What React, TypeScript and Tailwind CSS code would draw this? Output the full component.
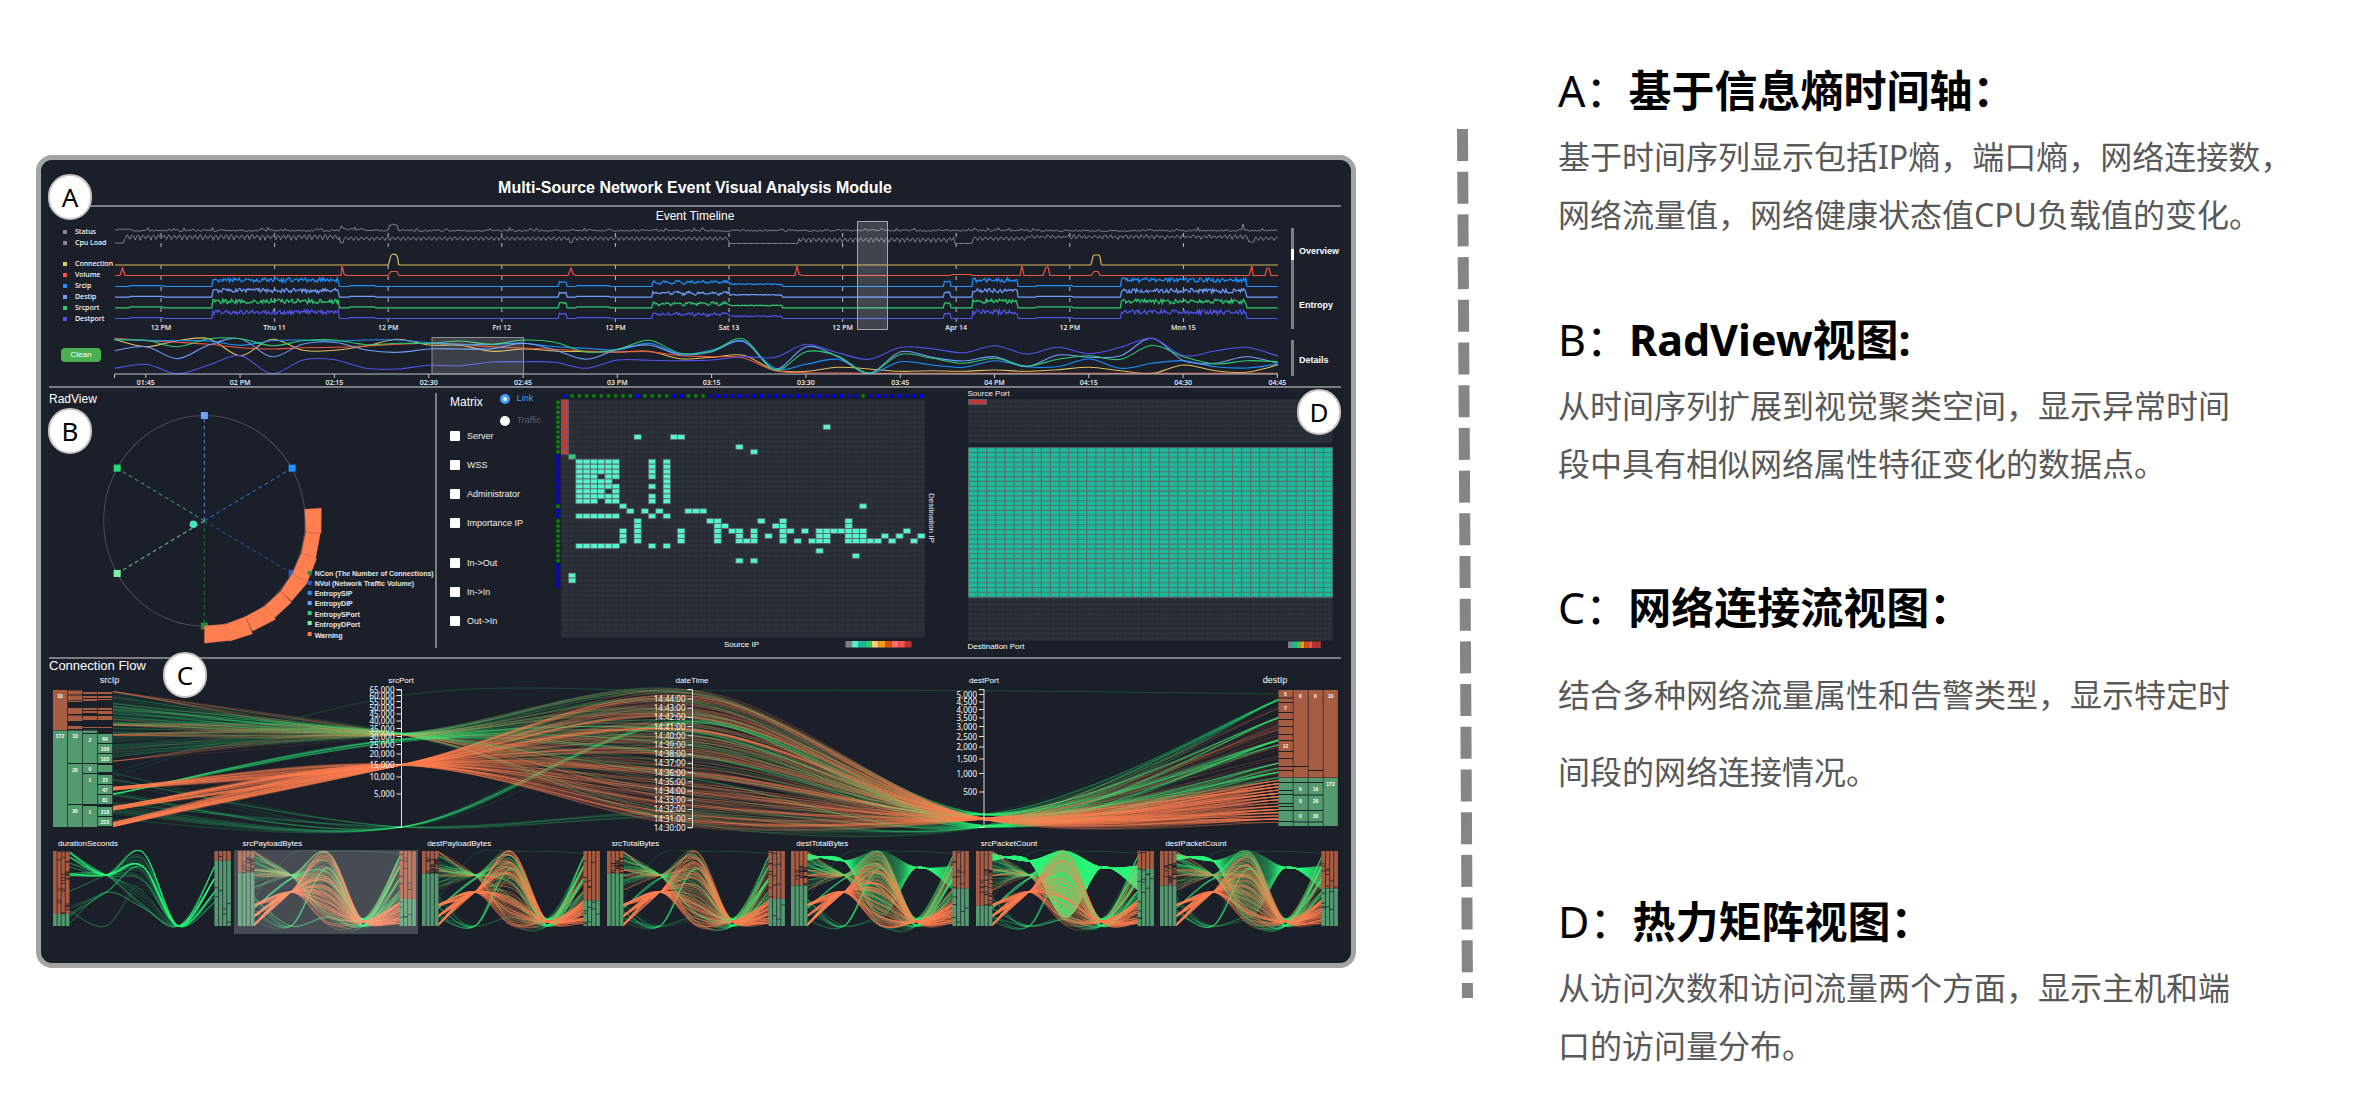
import React from "react";

/* ---------- shared helpers ---------- */

const UI_FONT = "font-['Liberation_Sans',Arial,sans-serif]";
const AXIS_FONT = "font-['Noto_Sans','Noto_Sans_CJK_SC',sans-serif]";

const ORANGE = "#ff7f50";
const GREEN = "#2bf57a";

type Point = [number, number];

function rng(seed: number) {
  let s = seed;
  return () => {
    s = (s + 0x6d2b79f5) | 0;
    let t = Math.imul(s ^ (s >>> 15), 1 | s);
    t = (t + Math.imul(t ^ (t >>> 7), 61 | t)) ^ t;
    return ((t ^ (t >>> 14)) >>> 0) / 4294967296;
  };
}

const r1 = (n: number) => Math.round(n * 10) / 10;

function polyline(points: Point[]) {
  return "M" + points.map(([x, y]) => `${r1(x)},${r1(y)}`).join("L");
}

function smooth(points: Point[]) {
  let d = `M${r1(points[0][0])},${r1(points[0][1])}`;
  for (let i = 0; i < points.length - 1; i++) {
    const a = points[i - 1] ?? points[i];
    const b = points[i];
    const c = points[i + 1];
    const e = points[i + 2] ?? c;
    d += `C${r1(b[0] + (c[0] - a[0]) / 6)},${r1(b[1] + (c[1] - a[1]) / 6)} ${r1(c[0] - (e[0] - b[0]) / 6)},${r1(
      c[1] - (e[1] - b[1]) / 6
    )} ${r1(c[0])},${r1(c[1])}`;
  }
  return d;
}

/* ---------- A: event timeline ---------- */

const overviewTicks = ["12 PM", "Thu 11", "12 PM", "Fri 12", "12 PM", "Sat 13", "12 PM", "Apr 14", "12 PM", "Mon 15"];

const seriesLegend = [
  [
    { name: "Status", color: "bg-[#7f8694]" },
    { name: "Cpu Load", color: "bg-[#7f8694]" },
  ],
  [
    { name: "Connection", color: "bg-[#e8c35a]" },
    { name: "Volume", color: "bg-[#ff5a3c]" },
    { name: "Srcip", color: "bg-[#1e90ff]" },
    { name: "Destip", color: "bg-[#6f9fff]" },
    { name: "Srcport", color: "bg-[#2ecc71]" },
    { name: "Destport", color: "bg-[#5352ed]" },
  ],
];

function statusLine() {
  const rand = rng(4);
  const pts: Point[] = [];
  for (let x = 115; x <= 1278; x += 1.5) {
    let y = 231.5 - (rand() > 0.85 ? rand() * 4 : rand() * 1.8);
    if (x < 130) y -= 1;
    if (x > 340 && x < 372) y -= 1.5 * (1 - (x - 340) / 40);
    if (x > 340 && x < 343) y -= 3;
    if (x > 389 && x < 398) y = 224 + rand() * 2.5;
    if (x > 1242 && x < 1244) y = 224;
    pts.push([x, y]);
  }
  return polyline(pts);
}

function cpuLine() {
  const rand = rng(9);
  const pts: Point[] = [];
  for (let x = 115; x <= 1278; x += 1.2) {
    const wave = Math.abs(Math.sin((x * Math.PI) / 5.2));
    let y = 241 - wave * 4;
    if (x < 124) y = 243;
    else if (x < 340) y = 240 - wave * 5.5 + rand();
    else if (x < 344) y = 243;
    else if (x > 569 && x < 573) y = 242.5;
    else if (x > 729 && x < 798) y = 243.5;
    else if (x >= 798 && x < 950) y = 243 - wave * 5;
    else if (x >= 955 && x < 973) y = 243.5;
    else if (x >= 1028 && x < 1248) y = 238 - wave * 3.5 + rand() * 2;
    else if (x >= 1248 && x < 1254) y = 242;
    pts.push([x, y]);
  }
  return polyline(pts);
}

const connectionLine =
  "M115,265H388C390,262 390,255 392,254.5C395,253.5 398,253.5 398.500,264.500L400,265H1090C1093,263 1092,255.5 1094,255H1099C1101,256 1100,264 1102,265H1278";

const volumeLine =
  "M115,275.500H120L122.500,268L125,275.500H341L342,266L344,274L347,275.500H388L391,271.500H397L399,275.500H568L571,268L573,274L576,275.500H795L797,266L799,274L802,275.500H950L952,274.500H970L973,275.500H1020L1022,266L1024,275.500H1043L1046,267H1048L1050,275.500H1091L1094,271.500H1098L1100,275.500H1249L1252,266L1253,275.500H1265L1267,268H1269L1271,275.500H1278";

function entropyLine(offset: number, seed: number) {
  const rand = rng(seed);
  const pts: Point[] = [];
  const within = (x: number, a: number, b: number) => x >= a && x <= b;
  for (let x = 115; x <= 1278; x += 1.1) {
    let y = 286.5;
    if (within(x, 130, 163) || within(x, 350, 375) || within(x, 577, 610) || within(x, 1036, 1073)) y = 285.6;
    if (within(x, 212, 339) || within(x, 973, 1018) || within(x, 1121, 1246)) y = 280.5 + (rand() - 0.6) * 4.5;
    if (within(x, 559, 567) || within(x, 944, 950)) y = 281 + rand() * 1.5;
    if (within(x, 652, 729)) y = 283 + Math.max(0, Math.sin(x / 1.9)) * 1.8 - rand() * 2.5;
    if (within(x, 729, 782)) y = 284.6 - rand() * 0.9;
    pts.push([x, y + offset]);
  }
  return polyline(pts);
}

const entropySeries = [
  { color: "#1e90ff", offset: 0, seed: 21 },
  { color: "#6f9fff", offset: 10.7, seed: 22 },
  { color: "#2ecc71", offset: 21.3, seed: 23 },
  { color: "#5352ed", offset: 32, seed: 24 },
];

function OverviewChart() {
  return (
    <svg viewBox="114 222 1166 112" className="block h-auto w-full overflow-visible font-medium" role="img" aria-label="Event overview">
      {overviewTicks.map((label, i) => {
        const x = 161 + i * 113.6;
        return (
          <g key={i}>
            <path
              d={[233, 243, 265, 276, 287, 298, 308, 318].map((y) => `M${x},${y}v4`).join("")}
              stroke="#b8bbc0"
              strokeWidth="1"
            />
            <text x={x} y="329.500" textAnchor="middle" fontSize="7" fill="#fff">
              {label}
            </text>
          </g>
        );
      })}
      <g fill="none" strokeWidth="1">
        <path d={statusLine()} stroke="#868d9a" strokeWidth="0.9" />
        <path d={cpuLine()} stroke="#868d9a" strokeWidth="0.9" />
        <path d={connectionLine} stroke="#d9b858" strokeWidth="1.2" />
        <path d={volumeLine} stroke="#f0553c" strokeWidth="1.2" />
        {entropySeries.map((s) => (
          <path key={s.color} d={entropyLine(s.offset, s.seed)} stroke={s.color} strokeWidth="1.2" />
        ))}
      </g>
      <rect x="857.500" y="221.500" width="30" height="108" fill="#fff" fillOpacity="0.17" stroke="#a5a7ab" />
    </svg>
  );
}

const detailSeries = [
  {
    color: "#e3be59",
    v: [568, 590, 572, 566, 617, 568, 601, 601, 588, 568, 585, 586, 604, 597, 603, 605, 606, 604, 626, 622, 616, 660, 664, 652, 657, 664, 662, 664, 660, 664, 659, 652, 662, 670, 645, 662, 667, 645],
  },
  {
    color: "#f0553c",
    v: [565, 572, 577, 583, 593, 597, 593, 592, 588, 583, 580, 583, 590, 594, 598, 603, 606, 605, 617, 620, 624, 662, 668, 669, 670, 670, 670, 670, 670, 670, 670, 670, 670, 670, 670, 670, 670, 670],
  },
  {
    color: "#1e90ff",
    v: [568, 571, 572, 573, 586, 572, 570, 573, 570, 570, 578, 583, 583, 580, 590, 595, 600, 580, 612, 600, 575, 655, 643, 628, 670, 635, 645, 652, 632, 650, 650, 627, 655, 640, 632, 650, 654, 642],
  },
  {
    color: "#6f9fff",
    v: [602, 590, 626, 585, 566, 620, 582, 577, 600, 607, 597, 597, 596, 580, 600, 628, 598, 585, 614, 605, 573, 658, 590, 620, 670, 605, 622, 633, 620, 650, 615, 622, 617, 565, 632, 640, 620, 640],
  },
  {
    color: "#2ecc71",
    v: [570, 571, 590, 566, 566, 587, 572, 570, 584, 580, 580, 573, 583, 570, 577, 606, 598, 571, 610, 603, 567, 660, 605, 618, 670, 613, 625, 640, 625, 648, 628, 617, 628, 586, 620, 642, 632, 635],
  },
  {
    color: "#5352ed",
    v: [655, 643, 671, 645, 617, 671, 630, 629, 655, 657, 646, 647, 636, 635, 637, 655, 630, 631, 632, 630, 620, 622, 583, 608, 628, 592, 596, 608, 587, 612, 592, 611, 592, 565, 617, 603, 592, 618],
  },
];

const detailTicks = ["01:45", "02 PM", "02:15", "02:30", "02:45", "03 PM", "03:15", "03:30", "03:45", "04 PM", "04:15", "04:30", "04:45"];

function DetailChart() {
  return (
    <svg viewBox="114 334 1166 52" className="block h-auto w-full overflow-visible font-medium" role="img" aria-label="Event details">
      <g fill="none" strokeWidth="1.1">
        {detailSeries.map((s) => (
          <path key={s.color} d={smooth(s.v.map((v, k): Point => [114.6 + k * 31.44, 150 + v / 3]))} stroke={s.color} />
        ))}
      </g>
      <path d="M114.500,378V374H1278" fill="none" stroke="#c3c5c8" strokeWidth="1" />
      <rect x="432" y="337.500" width="91.500" height="36.500" fill="#fff" fillOpacity="0.15" stroke="#8d9095" />
      {detailTicks.map((label, i) => {
        const x = 145.8 + i * 94.3;
        return (
          <g key={label}>
            <path d={`M${x},374v4`} stroke="#c3c5c8" />
            <text x={x} y="384.500" textAnchor="middle" fontSize="7" fill="#fff">
              {label}
            </text>
          </g>
        );
      })}
    </svg>
  );
}

function Timeline() {
  return (
    <section className="border-b-2 border-[#7b7d82] pt-[3px]">
      <h2 className="text-center text-[12px] leading-3 text-white">Event Timeline</h2>
      <div className="grid grid-cols-[65fr_1166fr_61fr]">
        <div className={`flex flex-col gap-[10px] pt-1 pl-[14px] ${AXIS_FONT}`}>
          {seriesLegend.map((group, g) => (
            <ul key={g}>
              {group.map((s) => (
                <li key={s.name} className="flex h-[11px] items-center gap-[8px] text-[7px] leading-[11px] font-medium whitespace-nowrap text-white">
                  <span className={`h-1 w-1 shrink-0 ${s.color}`} />
                  {s.name}
                </li>
              ))}
            </ul>
          ))}
        </div>
        <div className={AXIS_FONT}>
          <OverviewChart />
        </div>
        <div className="flex items-stretch gap-[5px] pt-[6px] pb-[5px] pl-[11px]">
          <div className="w-[3px] shrink-0 bg-[#7f7f7f] pt-[21px]">
            <div className="h-[11px] bg-white" />
          </div>
          <div className="flex flex-col gap-[42px] pt-[17px] text-[9px] leading-3 font-bold text-white">
            <span>Overview</span>
            <span>Entropy</span>
          </div>
        </div>
        <div className="pt-[14px] pl-3">
          <button type="button" className="block h-[14px] w-10 rounded-[4px] bg-[#4caf50] text-center text-[8px] leading-[14px] text-white">
            Clean
          </button>
        </div>
        <div className={AXIS_FONT}>
          <DetailChart />
        </div>
        <div className="flex items-stretch gap-[5px] pt-[6px] pb-[10px] pl-[11px]">
          <div className="w-[3px] shrink-0 bg-[#7f7f7f]" />
          <span className="self-center pt-1 text-[9px] leading-3 font-bold text-white">Details</span>
        </div>
      </div>
    </section>
  );
}

/* ---------- B: radial view ---------- */

const radNodes = [
  { x: 204, y: 415.5, color: "#6f9fff" },
  { x: 291.5, y: 468, color: "#1e90ff" },
  { x: 291.5, y: 573, color: "#2a5cc4" },
  { x: 204, y: 625.5, color: "#218c3a" },
  { x: 117, y: 573, color: "#7bf5a5" },
  { x: 117, y: 468, color: "#2ed573" },
];

const warningSegments = [
  "304,509 320.700,507.700 320.500,533 305,531.700",
  "305,531.700 319.700,533 315,558.300 300.700,552.700",
  "300.700,552.700 316,558.300 306.700,581.700 291.700,573.300",
  "291.700,573.300 307.300,581.700 291,600.700 280,590.700",
  "280,590.700 291,601.700 272.300,619 264,605.700",
  "264,605.700 275,619 251.700,630.700 245,616",
  "245,616 252,633.300 229,640.700 225.300,623.700",
  "225.300,623.700 230,640 204,642.700 204,625.300",
];

const radLegend = [
  { y: 573, label: "NCon (The Number of Connections)", color: "#218c3a" },
  { y: 583, label: "NVol (Network Traffic Volume)", color: "#2a5cc4" },
  { y: 593, label: "EntropySIP", color: "#1e90ff" },
  { y: 603, label: "EntropyDIP", color: "#6f9fff" },
  { y: 613, label: "EntropySPort", color: "#2ed573" },
  { y: 623, label: "EntropyDPort", color: "#7bf5a5" },
  { y: 634, label: "Warning", color: ORANGE },
];

function RadView() {
  return (
    <div>
      <h2 className="pt-[3px] text-[12px] leading-4 text-white">RadView</h2>
      <svg viewBox="49 407 387 249" className="block h-auto w-full overflow-visible" role="img" aria-label="Radial view">
        <ellipse cx="204" cy="520.500" rx="100.500" ry="105" fill="none" stroke="#4a4d57" />
        {radNodes.map((n) => (
          <line key={n.color} x1="204" y1="520.500" x2={n.x} y2={n.y} stroke={n.color} strokeWidth="1.2" strokeOpacity="0.65" strokeDasharray="4 3" />
        ))}
        {radNodes.map((n) => (
          <rect key={n.color} x={n.x - 3.5} y={n.y - 3.5} width="7" height="7" fill={n.color} />
        ))}
        {warningSegments.map((p) => (
          <polygon key={p} points={p} fill={ORANGE} stroke="#c9653f" strokeWidth="0.3" />
        ))}
        <circle cx="193" cy="524" r="3.800" fill="#4be3bd" />
        {radLegend.map((l) => (
          <g key={l.label}>
            <rect x="307" y={l.y - 2.5} width="4" height="4" fill={l.color} />
            <text x="314" y={l.y + 3} fontSize="7" fontWeight="700" fill="#e4e6ea">
              {l.label}
            </text>
          </g>
        ))}
      </svg>
    </div>
  );
}

/* ---------- D: matrix ---------- */

function MatrixCheckbox({ label }: { label: string }) {
  return (
    <label className="flex h-[14px] items-center gap-[7px] text-[9px] leading-[14px] whitespace-nowrap text-[#f0f0f0]">
      <input type="checkbox" className="h-[10px] w-[10px] appearance-none rounded-[1px] bg-white checked:bg-[#409eff]" />
      {label}
    </label>
  );
}

function MatrixControls() {
  return (
    <div className="pl-[13px]">
      <div className="flex gap-[17px] pt-[3px]">
        <h2 className="pt-[3px] text-[12px] leading-4 text-white">Matrix</h2>
        <div className="flex flex-col gap-[6px]">
          <label className="flex h-4 items-center gap-[7px] text-[9px] text-[#409eff]">
            <input
              type="radio"
              name="metric"
              defaultChecked
              className="h-[10px] w-[10px] appearance-none rounded-full border-[3px] border-[#409eff] bg-white"
            />
            Link
          </label>
          <label className="flex h-4 items-center gap-[7px] text-[9px] text-[#5d6066]">
            <input type="radio" name="metric" className="h-[10px] w-[10px] appearance-none rounded-full bg-white" />
            Traffic
          </label>
        </div>
      </div>
      <div className="flex flex-col gap-[15px]">
        {["Server", "WSS", "Administrator", "Importance IP"].map((l) => (
          <MatrixCheckbox key={l} label={l} />
        ))}
      </div>
      <div className="mt-[26px] flex flex-col gap-[15px]">
        {["In->Out", "In->In", "Out->In"].map((l) => (
          <MatrixCheckbox key={l} label={l} />
        ))}
      </div>
    </div>
  );
}

const block = [2, 3, 4, 5, 6, 7];
const ipCells: Record<number, number[]> = {
  5: [36],
  7: [10, 15, 16],
  9: [24],
  10: [26],
  12: [...block, 12, 14],
  13: [...block, 12, 14],
  14: [...block, 12, 14],
  15: [2, 3, 4, 6, 7, 12, 14],
  16: [2, 3, 4, 5, 6, 14],
  17: [...block, 12, 14],
  18: [2, 3, 4, 5, 7, 14],
  19: [...block, 12, 14],
  20: [2, 3, 4, 6, 7, 12, 14],
  21: [8, 41],
  22: [9, 11, 13, 17, 18, 19],
  23: [...block, 12, 14],
  24: [10, 20, 21, 27, 30, 39],
  25: [10, 21, 22, 29, 30, 39],
  26: [8, 10, 16, 21, 23, 24, 26, 30, 31, 33, 35, 36, 37, 38, 39, 40, 41, 47],
  27: [8, 10, 16, 21, 24, 26, 28, 30, 35, 36, 39, 40, 41, 44, 46, 49],
  28: [8, 10, 16, 21, 24, 25, 26, 30, 32, 34, 35, 36, 39, 40, 41, 42, 43, 45, 48],
  29: [...block, 12, 14],
  30: [35],
  31: [40],
  32: [24, 26],
  35: [1],
  36: [1],
};

function gridLines(x: number, y: number, cols: number, rows: number, cw: number, ch: number) {
  let d = "";
  for (let c = 0; c <= cols; c++) d += `M${r1(x + c * cw)},${y}v${r1(rows * ch)}`;
  for (let r = 0; r <= rows; r++) d += `M${x},${r1(y + r * ch)}h${r1(cols * cw)}`;
  return d;
}

function Dot({ x, y, server }: { x: number; y: number; server: boolean }) {
  return server ? <circle cx={x} cy={y} r="2" fill="#0a800a" /> : <rect x={x - 1.5} y={y - 2} width="3" height="4" fill="#0000f0" />;
}

const isServerColumn = (i: number) => (i >= 1 && i <= 9) || (i >= 11 && i <= 14) || (i >= 17 && i <= 19) || i === 41;
const isServerRow = (i: number) => i <= 10 || i === 21 || (i >= 24 && i <= 32);

function ColorScale({ x, y, w, colors }: { x: number; y: number; w: number; colors: string[] }) {
  return (
    <g>
      {colors.map((c, i) => (
        <rect key={i} x={r1(x + i * w)} y={y} width={w} height="6.500" fill={c} />
      ))}
    </g>
  );
}

function IpMatrix() {
  const x0 = 561.2;
  const y0 = 399.8;
  const cw = 7.276;
  const ch = 4.95;
  return (
    <svg viewBox="550 388 395 268" className="block h-auto w-full" role="img" aria-label="IP matrix">
      <rect x={x0} y={y0} width={50 * cw} height={48 * ch} fill="#2c3038" />
      <path d={gridLines(x0, y0, 50, 48, cw, ch)} stroke="#252a32" strokeWidth="0.8" />
      {Array.from({ length: 50 }, (_, i) => (
        <Dot key={i} x={x0 + (i + 0.5) * cw} y={396} server={isServerColumn(i)} />
      ))}
      {Array.from({ length: 38 }, (_, i) => (
        <Dot key={i} x={558} y={y0 + (i + 0.5) * ch} server={isServerRow(i)} />
      ))}
      <g stroke="#5b6269" strokeWidth="0.8">
        {Array.from({ length: 11 }, (_, r) => (
          <rect key={r} x={x0} y={y0 + r * ch} width={cw} height={ch} fill="#c23b3b" />
        ))}
        <rect x={x0 + cw} y={y0 + 11 * ch} width={cw} height={ch} fill="#2ecc71" />
        {Object.entries(ipCells).map(([row, cols]) =>
          cols.map((c) => (
            <rect key={`${row}-${c}`} x={r1(x0 + c * cw)} y={r1(y0 + Number(row) * ch)} width={cw} height={ch} fill="#55f5cb" />
          ))
        )}
      </g>
      <text x="741.500" y="646.500" textAnchor="middle" fontSize="8" fill="#fff">
        Source IP
      </text>
      <text transform="translate(929 493) rotate(90)" fontSize="8" fill="#f0f0f0">
        Destination IP
      </text>
      <ColorScale
        x={845.5}
        y={641}
        w={6.6}
        colors={["#808080", "#55efc4", "#1abc9c", "#2ecc71", "#fdcb6e", "#f39c12", "#d35400", "#ff6b6b", "#ff4d4d", "#b83232"]}
      />
    </svg>
  );
}

function PortMatrix() {
  const x0 = 968.5;
  const y0 = 399.5;
  const cw = 9.1;
  const ch = 4.82;
  return (
    <svg viewBox="945 388 396 268" className="block h-auto w-full" role="img" aria-label="Port matrix">
      <text x="967.500" y="396" fontSize="8" fill="#f0f0f0">
        Source Port
      </text>
      <rect x={x0} y={y0} width={40 * cw} height={9 * ch} fill="#2c3038" />
      <path d={gridLines(x0, y0, 40, 9, cw, ch)} stroke="#252a32" strokeWidth="0.8" />
      <rect x={x0} y={y0 + 41 * ch} width={40 * cw} height={9 * ch} fill="#2c3038" />
      <path d={gridLines(x0, y0 + 41 * ch, 40, 9, cw, ch)} stroke="#252a32" strokeWidth="0.8" />
      <g stroke="#5b6269" strokeWidth="0.8" fill="#c23b3b">
        <rect x={x0} y={y0} width={cw} height={ch} />
        <rect x={x0 + cw} y={y0} width={cw} height={ch} />
      </g>
      <rect x={x0} y={y0 + 10 * ch} width={40 * cw} height={31 * ch} fill="#1abc9c" />
      <path d={gridLines(x0, y0 + 10 * ch, 40, 31, cw, ch)} stroke="#56706d" strokeWidth="1.1" />
      <text x="967.500" y="649" fontSize="8" fill="#fff">
        Destination Port
      </text>
      <ColorScale
        x={1288}
        y={641.5}
        w={4.1}
        colors={["#808080", "#1abc9c", "#2ecc71", "#f39c12", "#d35400", "#ff4d4d", "#b83232", "#b83232"]}
      />
    </svg>
  );
}

/* ---------- C: connection flow ---------- */

type FlowLine = { y: number[]; color: string; o: number };
type FlowVariant = "base" | "green" | "fan" | "heavy";

function buildFlow(variant: FlowVariant, density: number, gain: number, seed: number): FlowLine[] {
  const rand = rng(seed);
  const lines: FlowLine[] = [];
  const pick = (a: number[]) => a[Math.floor(rand() * a.length)];
  const n = (count: number) => Math.round(count * density);
  const vary = (o: number) => Math.min(1, o * gain * (0.45 + rand() * 1.1));
  const greenDest = () => pick([0.068, 0.075, 0.2, 0.205, 0.365, 0.37, 0.535, 0.57, 0.6, 0.64, 0.4]);
  const greenPort = () => pick([0.905, 0.91, 1, 1, 0.99]);

  if (variant === "green") {
    for (let i = 0; i < n(52); i++)
      lines.push({
        y: [pick([0.01, 0.03, 0.08, 0.3, 0.32, 0.33, rand() * 0.55]), 0.32, pick([rand() * 0.75, 0.2, 0.01]), 1, pick([0.2, 0.36, 0.365, 0.54, 0.55, 0.68])],
        color: GREEN,
        o: 0.24,
      });
    for (let i = 0; i < n(8); i++) lines.push({ y: [0.7 + rand() * 0.3, 0.55, pick([0.21, 0.22, 0.75]), 1, 0.36], color: GREEN, o: 0.22 });
    for (let i = 0; i < n(3); i++) lines.push({ y: [0.8, 1, 0.4 + rand() * 0.1, 1, 0.6], color: GREEN, o: 0.16 });
    return lines;
  }

  if (variant === "fan" || variant === "heavy") {
    const count = variant === "heavy" ? 170 : 60;
    for (let i = 0; i < count; i++) {
      const t = i / count;
      lines.push({ y: [0.04 + t * 0.08, 0.13, t * 0.9, 0.22, 0.2 + t * 0.32], color: GREEN, o: variant === "heavy" ? 0.8 : 0.32 });
    }
  }

  for (let i = 0; i < n(90); i++)
    lines.push({ y: [rand() * 0.5, 0.315 + rand() * 0.012, Math.pow(rand(), 1.2), greenPort(), greenDest()], color: GREEN, o: vary(0.1) });
  for (let i = 0; i < n(50); i++)
    lines.push({
      y: [pick([0.01, 0.015, 0.25, 0.255, 0.325, 0.33, 0.52, rand() * 0.5]), 0.325, rand(), 0.94, rand() * 0.6 + 0.1],
      color: ORANGE,
      o: vary(0.16),
    });
  for (let i = 0; i < n(10); i++) lines.push({ y: [0.757 + rand() * 0.006, 0.358 + rand() * 0.02, rand() * 0.5, 0.91, greenDest()], color: GREEN, o: vary(0.26) });
  for (let i = 0; i < n(22); i++)
    lines.push({
      y: [0.6 + rand() * 0.35, 1, rand() > 0.25 ? pick([0.22, 0.23, 0.24, rand() * 0.4]) : 0.87 + rand() * 0.06, 0.99, greenDest()],
      color: GREEN,
      o: vary(0.16),
    });
  for (let i = 0; i < 2; i++) lines.push({ y: [0.6 + i * 0.03, 0.04, 0.005, 0.005, 0.03], color: GREEN, o: 0.1 });
  const total = n(150);
  for (let i = 0; i < total; i++) {
    const src = pick([0.708, 0.718, 0.724, 0.85, 0.86, 0.87, 0.965, 0.978, 0.99]) + rand() * 0.008;
    const dest = 0.66 + (Math.floor(rand() * 14) / 14) * 0.33;
    lines.push({ y: [src, 0.543 + rand() * 0.006, rand(), 0.935 + rand() * 0.012, dest], color: ORANGE, o: vary(0.25) });
  }
  for (let i = 0; i < n(12); i++)
    lines.push({ y: [0.02 + rand() * 0.3, 0.32, rand(), greenPort(), pick([0.068, 0.2, 0.365, 0.535, 0.56, 0.6, 0.625])], color: GREEN, o: vary(0.2) });
  return lines;
}

function FlowCurves({ lines, xs, top, height }: { lines: FlowLine[]; xs: number[]; top: number; height: number }) {
  return (
    <g fill="none">
      {lines.map((l, i) => (
        <path key={i} d={smooth(l.y.map((v, k): Point => [xs[k], top + v * height]))} stroke={l.color} strokeOpacity={l.o} strokeWidth="1" />
      ))}
    </g>
  );
}

const RED_BLOCK = "#a85c42";
const GREEN_BLOCK = "#549a6f";

type TreeCell = { c: number; a: number; b: number; t?: string; red?: boolean };

const srcCells: TreeCell[] = [
  { c: 0, a: 690, b: 730, t: "10", red: true },
  { c: 0, a: 730.5, b: 827, t: "172" },
  { c: 1, a: 730.5, b: 763, t: "10" },
  { c: 1, a: 764, b: 804, t: "20" },
  { c: 1, a: 805, b: 827, t: "30" },
  { c: 2, a: 730.5, b: 733 },
  { c: 2, a: 734, b: 763, t: "2" },
  { c: 2, a: 764, b: 773, t: "0" },
  { c: 2, a: 774, b: 804, t: "1" },
  { c: 2, a: 806, b: 827, t: "1" },
  { c: 3, a: 734, b: 743, t: "66" },
  { c: 3, a: 744, b: 753, t: "108" },
  { c: 3, a: 754, b: 763, t: "105" },
  { c: 3, a: 765, b: 772 },
  { c: 3, a: 775, b: 784, t: "23" },
  { c: 3, a: 785, b: 794, t: "47" },
  { c: 3, a: 795, b: 804, t: "81" },
  { c: 3, a: 807, b: 816, t: "218" },
  { c: 3, a: 817, b: 826, t: "223" },
  { c: 1, a: 690.5, b: 694.5, red: true },
  { c: 1, a: 695.5, b: 700, red: true },
  { c: 1, a: 700.7, b: 702, red: true },
  { c: 1, a: 708, b: 714, red: true },
  { c: 1, a: 715.5, b: 721, red: true },
  { c: 1, a: 726, b: 729, red: true },
  { c: 2, a: 692, b: 694, red: true },
  { c: 2, a: 696, b: 698, red: true },
  { c: 2, a: 699, b: 701, red: true },
  { c: 2, a: 708, b: 710, red: true },
  { c: 2, a: 711, b: 713, red: true },
  { c: 2, a: 716, b: 720, red: true },
  { c: 2, a: 727, b: 728, red: true },
  { c: 3, a: 692, b: 694, red: true },
  { c: 3, a: 696, b: 698, red: true },
  { c: 3, a: 699, b: 700, red: true },
  { c: 3, a: 708, b: 710, red: true },
  { c: 3, a: 711, b: 714, red: true },
  { c: 3, a: 716, b: 720, red: true },
  { c: 3, a: 727, b: 728, red: true },
];

const destCells: TreeCell[] = [
  { c: 3, a: 690, b: 777.5, t: "10", red: true },
  { c: 3, a: 778, b: 826, t: "172" },
  { c: 2, a: 690, b: 770, t: "0", red: true },
  { c: 2, a: 771, b: 777.5, red: true },
  { c: 1, a: 690, b: 766, t: "0", red: true },
  { c: 1, a: 767, b: 777.5, red: true },
  { c: 0, a: 690, b: 697.5, t: "5", red: true },
  { c: 0, a: 698.5, b: 702, red: true },
  { c: 0, a: 703, b: 712, t: "7", red: true },
  { c: 0, a: 713, b: 719, red: true },
  { c: 0, a: 720, b: 726, red: true },
  { c: 0, a: 727, b: 734, red: true },
  { c: 0, a: 735, b: 740, red: true },
  { c: 0, a: 741, b: 751, t: "12", red: true },
  { c: 0, a: 752, b: 758, red: true },
  { c: 0, a: 759, b: 766, red: true },
  { c: 0, a: 767, b: 770, red: true },
  { c: 0, a: 771, b: 777.5, red: true },
  { c: 0, a: 778, b: 782 },
  { c: 0, a: 783, b: 790 },
  { c: 0, a: 791, b: 794 },
  { c: 0, a: 795, b: 803 },
  { c: 0, a: 804, b: 806 },
  { c: 0, a: 807, b: 810 },
  { c: 0, a: 811, b: 821 },
  { c: 0, a: 822, b: 826 },
  { c: 1, a: 778, b: 782 },
  { c: 1, a: 783, b: 794.5, t: "0" },
  { c: 1, a: 795.5, b: 810, t: "0" },
  { c: 1, a: 811, b: 821.5, t: "0" },
  { c: 1, a: 822.5, b: 826 },
  { c: 2, a: 778, b: 782 },
  { c: 2, a: 783, b: 794.5, t: "10" },
  { c: 2, a: 795.5, b: 810, t: "20" },
  { c: 2, a: 811, b: 821.5, t: "30" },
  { c: 2, a: 822.5, b: 826 },
];

function TreeBlocks({ x, cells }: { x: number; cells: TreeCell[] }) {
  return (
    <g>
      {cells.map((cell, i) => (
        <g key={i}>
          <rect x={x + cell.c * 15} y={cell.a} width="14.300" height={cell.b - cell.a} fill={cell.red ? RED_BLOCK : GREEN_BLOCK} />
          {cell.t && (
            <text x={x + cell.c * 15 + 7} y={Math.min(cell.a + 7.5, (cell.a + cell.b) / 2 + 2)} textAnchor="middle" fontSize="5" fontWeight="700" fill="#fff">
              {cell.t}
            </text>
          )}
        </g>
      ))}
    </g>
  );
}

const portTicks: [string, number][] = [
  ["65,000", 690],
  ["60,000", 695.5],
  ["55,000", 701.5],
  ["50,000", 707.5],
  ["45,000", 714],
  ["40,000", 721],
  ["35,000", 728.5],
  ["30,000", 736.5],
  ["25,000", 744.5],
  ["20,000", 754],
  ["15,000", 764.5],
  ["10,000", 777],
  ["5,000", 794],
];

const destPortTicks: [string, number][] = [
  ["5,000", 694.5],
  ["4,500", 702],
  ["4,000", 709.5],
  ["3,500", 718],
  ["3,000", 726.5],
  ["2,500", 736.5],
  ["2,000", 747],
  ["1,500", 759],
  ["1,000", 773.5],
  ["500", 792],
];

const timeTicks: [string, number][] = Array.from({ length: 15 }, (_, i) => [`14:${44 - i}:00`, 699 + i * 9.2]);

function FlowAxis({ x, ticks }: { x: number; ticks: [string, number][] }) {
  return (
    <g className={AXIS_FONT}>
      <path d={`M${x - 5},689.500H${x}V827.500H${x - 5}`} fill="none" stroke="#e3e3e3" />
      {ticks.map(([label, y]) => (
        <g key={label}>
          <path d={`M${x - 5},${y}h5`} stroke="#e3e3e3" />
          <text x={x - 7} y={y + 3} textAnchor="end" fontSize="8" fill="#fff">
            {label}
          </text>
        </g>
      ))}
    </g>
  );
}

const mainFlow = buildFlow("base", 1, 1, 77);

function FlowChart() {
  return (
    <svg viewBox="49 673 1292 164" className="block h-auto w-full overflow-visible" role="img" aria-label="Connection flow">
      <FlowCurves lines={mainFlow} xs={[113, 401.500, 692.500, 984, 1278.500]} top={690} height={137} />
      <TreeBlocks x={53} cells={srcCells} />
      <TreeBlocks x={1278.5} cells={destCells} />
      <FlowAxis x={401.5} ticks={portTicks} />
      <FlowAxis x={692.5} ticks={timeTicks} />
      <FlowAxis x={984} ticks={destPortTicks} />
      <g fill="#fff" fontSize="8" textAnchor="middle">
        <text x="109.500" y="683" fontSize="9">
          srcIp
        </text>
        <text x="401" y="683">
          srcPort
        </text>
        <text x="692" y="683">
          dateTime
        </text>
        <text x="984" y="683">
          destPort
        </text>
        <text x="1275" y="683" fontSize="9">
          destIp
        </text>
      </g>
    </svg>
  );
}

function MiniBlocks({ x, split, seed, dense }: { x: number; split: number; seed: number; dense: boolean }) {
  const rand = rng(seed);
  const cut = 1 + split * 75;
  let seams = "";
  for (let c = 1; c < 4; c++) seams += `M${x + c * 4.1},1V76`;
  for (let c = 0; c < 4; c++) {
    const count = dense ? c * 5 : split < 0.2 ? 2 : 7 - c * 2;
    for (let i = 0; i < count; i++) {
      const y = dense && split > 0.8 ? 1 + rand() * cut : dense ? cut * (0.35 + rand() * 0.65) : 1 + rand() * 74;
      seams += `M${x + c * 4.1},${r1(y)}h4.1`;
    }
  }
  return (
    <g>
      <rect x={x} y="1" width="16.400" height={cut - 1} fill={RED_BLOCK} />
      <rect x={x} y={cut} width="16.400" height={76 - cut} fill={GREEN_BLOCK} />
      <path d={seams} stroke="#1a1f29" strokeOpacity="0.75" strokeWidth="1" fill="none" />
    </g>
  );
}

const miniCharts: { name: string; variant: FlowVariant; src: number; dest: number; active?: boolean }[] = [
  { name: "durationSeconds", variant: "green", src: 0.84, dest: 0.13 },
  { name: "srcPayloadBytes", variant: "base", src: 0.29, dest: 0.64, active: true },
  { name: "destPayloadBytes", variant: "base", src: 0.3, dest: 0.66 },
  { name: "srcTotalBytes", variant: "base", src: 0.3, dest: 0.64 },
  { name: "destTotalBytes", variant: "fan", src: 0.46, dest: 0.5 },
  { name: "srcPacketCount", variant: "heavy", src: 0.73, dest: 0.24 },
  { name: "destPacketCount", variant: "fan", src: 0.46, dest: 0.5 },
];

function ConnectionFlow() {
  return (
    <section>
      <h2 className="text-[13px] leading-[14px] text-white">Connection Flow</h2>
      <FlowChart />
      <div className="grid grid-cols-7">
        {miniCharts.map((m, i) => (
          <figure key={m.name}>
            <figcaption className="pl-[9px] text-[8px] leading-[13px] text-white">{m.name}</figcaption>
            <svg viewBox="0 0 184.600 84" className="block h-auto w-full" role="img" aria-label={m.name}>
              <FlowCurves lines={buildFlow(m.variant, m.variant === "green" ? 1 : 0.55, 1.5, 100 + i)} xs={[20.5, 57, 93.300, 129.500, 166]} top={1} height={75} />
              <MiniBlocks x={4} split={m.src} seed={300 + i} dense />
              <MiniBlocks x={165.5} split={m.dest} seed={400 + i} dense={false} />
              {m.active && <rect width="184.600" height="84" fill="#fff" fillOpacity="0.2" />}
            </svg>
          </figure>
        ))}
      </div>
    </section>
  );
}

/* ---------- page ---------- */

function Badge({ letter, place }: { letter: string; place: string }) {
  return (
    <span
      className={`absolute flex h-[46px] w-11 items-center justify-center rounded-full border-2 border-[#c8c4c8] bg-white text-[26px] leading-none text-black ${AXIS_FONT} ${place}`}
    >
      {letter}
    </span>
  );
}

function Dashboard() {
  return (
    <main className={`mt-[155px] rounded-2xl border-[5px] border-[#a3a4a4] bg-[#1a1f29] pr-[10px] pb-[29px] pl-2 ${UI_FONT}`}>
      <header className="relative border-b-2 border-[#7b7d82] pt-[18px] pb-[7px]">
        <h1 className="text-center text-[16px] leading-5 font-bold text-white">Multi-Source Network Event Visual Analysis Module</h1>
        <Badge letter="A" place="top-[14px] -left-px" />
      </header>
      <Timeline />
      <section className="relative grid grid-cols-[388fr_113fr_395fr_396fr] border-b-2 border-[#7b7d82]">
        <div className="relative">
          <RadView />
          <div className="absolute top-[5px] right-0 bottom-[9px] w-[2px] bg-[#7b7d82]" />
        </div>
        <MatrixControls />
        <IpMatrix />
        <PortMatrix />
        <Badge letter="B" place="top-5 -left-px" />
        <Badge letter="D" place="top-px right-0" />
      </section>
      <div className="relative">
        <ConnectionFlow />
        <Badge letter="C" place="-top-[7px] left-[114px]" />
      </div>
    </main>
  );
}

const notes = [
  {
    letter: "A：",
    title: "基于信息熵时间轴：",
    lines: ["基于时间序列显示包括IP熵，端口熵，网络连接数，", "网络流量值，网络健康状态值CPU负载值的变化。"],
    block: "",
    body: "mt-[5px] leading-[58px]",
  },
  {
    letter: "B：",
    title: "RadView视图:",
    lines: ["从时间序列扩展到视觉聚类空间，显示异常时间", "段中具有相似网络属性特征变化的数据点。"],
    block: "mt-[64px]",
    body: "mt-[5px] leading-[58px]",
  },
  {
    letter: "C：",
    title: "网络连接流视图：",
    lines: ["结合多种网络流量属性和告警类型，显示特定时", "间段的网络连接情况。"],
    block: "mt-[83px]",
    body: "mt-4 leading-[77px]",
  },
  {
    letter: "D：",
    title: "热力矩阵视图：",
    lines: ["从访问次数和访问流量两个方面，显示主机和端", "口的访问量分布。"],
    block: "mt-[80px]",
    body: "mt-[5px] leading-[58px]",
  },
];

export default function App() {
  return (
    <div className="grid min-h-screen grid-cols-[minmax(0,1320fr)_minmax(0,963fr)] items-start bg-white px-9">
      <Dashboard />
      <aside lang="zh-CN" className={`flex ${AXIS_FONT}`}>
        <svg viewBox="0 0 18 869" className="mt-[129px] ml-[100px] w-[18px] shrink-0 self-start" aria-hidden="true">
          <line x1="6.500" y1="0" x2="11.500" y2="869" stroke="#858585" strokeWidth="11" strokeDasharray="32 10.700" />
        </svg>
        <div className="ml-[84px] pt-[59px]">
          {notes.map((n) => (
            <section key={n.letter} className={n.block}>
              <h2 className="text-[43px] leading-[64px] whitespace-nowrap text-black">
                {n.letter}
                <strong className="font-bold">{n.title}</strong>
              </h2>
              <p className={`text-[32px] whitespace-nowrap text-[#595959] ${n.body}`}>
                {n.lines[0]}
                <br />
                {n.lines[1]}
              </p>
            </section>
          ))}
        </div>
      </aside>
    </div>
  );
}
